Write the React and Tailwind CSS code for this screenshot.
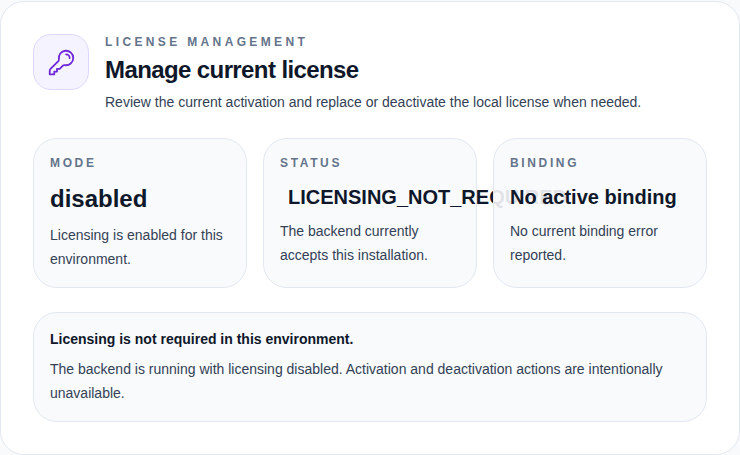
import React from "react";

const FONT = "font-['Liberation_Sans',Arial,sans-serif]";

const STATS = [
  {
    label: "MODE",
    value: "disabled",
    valueClass: "mt-3 text-2xl leading-[32px]",
    body: "Licensing is enabled for this environment.",
  },
  {
    label: "STATUS",
    value: "LICENSING_NOT_REQUIRED",
    valueClass: "mt-3 ml-2 text-xl leading-[28px] whitespace-nowrap",
    body: "The backend currently accepts this installation.",
  },
  {
    label: "BINDING",
    value: "No active binding",
    valueClass: "mt-3 text-xl leading-[28px] whitespace-nowrap",
    body: "No current binding error reported.",
  },
];

const KeyIcon = () => (
  <svg
    viewBox="0 0 24 24"
    fill="none"
    stroke="currentColor"
    strokeWidth="1.5"
    strokeLinecap="round"
    strokeLinejoin="round"
    className="h-[29px] w-[29px] text-[#6d28d9]"
  >
    <path d="M15.75 5.25a3 3 0 0 1 3 3m3 0a6 6 0 0 1-7.029 5.912c-.563-.097-1.159.026-1.563.43L10.5 17.25H8.25v2.25H6v2.25H2.25v-2.818c0-.597.237-1.17.659-1.591l6.499-6.499c.404-.404.527-1 .43-1.563A6 6 0 1 1 21.75 8.25Z" />
  </svg>
);

const StatCard = ({ label, value, valueClass, body }) => (
  <div className="relative h-[150px] rounded-[24px] border border-[#e2e8f0] bg-[#f8fafc]/90 px-4 pt-4">
    <p className="text-xs leading-4 font-bold tracking-[0.22em] text-[#64748b]">{label}</p>
    <p className={`font-bold text-[#0f172a] ${valueClass}`}>{value}</p>
    <p className="mt-2 text-sm leading-6 text-[#334155]">{body}</p>
  </div>
);

export default function App() {
  return (
    <div className={`${FONT} h-[455px] w-[740px] overflow-hidden bg-[#f8fafc] pt-px`}>
      <div className="h-[454px] rounded-[24px] border border-[#e2e8f0] bg-white p-8">
        <div className="flex gap-4">
          <div className="flex h-14 w-14 shrink-0 items-center justify-center rounded-[18px] border border-[#ddd6fe] bg-[#f5f3ff]">
            <KeyIcon />
          </div>
          <div>
            <p className="text-xs leading-4 font-bold tracking-[0.28em] text-[#64748b]">LICENSE MANAGEMENT</p>
            <h1 className="mt-1 text-2xl leading-8 font-bold tracking-tight text-[#0f172a]">Manage current license</h1>
            <p className="mt-1 text-sm leading-6 text-[#334155]">
              Review the current activation and replace or deactivate the local license when needed.
            </p>
          </div>
        </div>

        <div className="mt-6 grid grid-cols-3 gap-4">
          {STATS.map((stat) => (
            <StatCard key={stat.label} {...stat} />
          ))}
        </div>

        <div className="mt-6 h-[110px] rounded-[24px] border border-[#e2e8f0] bg-[#f8fafc] px-4 pt-4">
          <p className="text-sm leading-5 font-bold text-[#0f172a]">Licensing is not required in this environment.</p>
          <p className="mt-2 text-sm leading-6 text-[#334155]">
            The backend is running with licensing disabled. Activation and deactivation actions are intentionally unavailable.
          </p>
        </div>
      </div>
    </div>
  );
}
